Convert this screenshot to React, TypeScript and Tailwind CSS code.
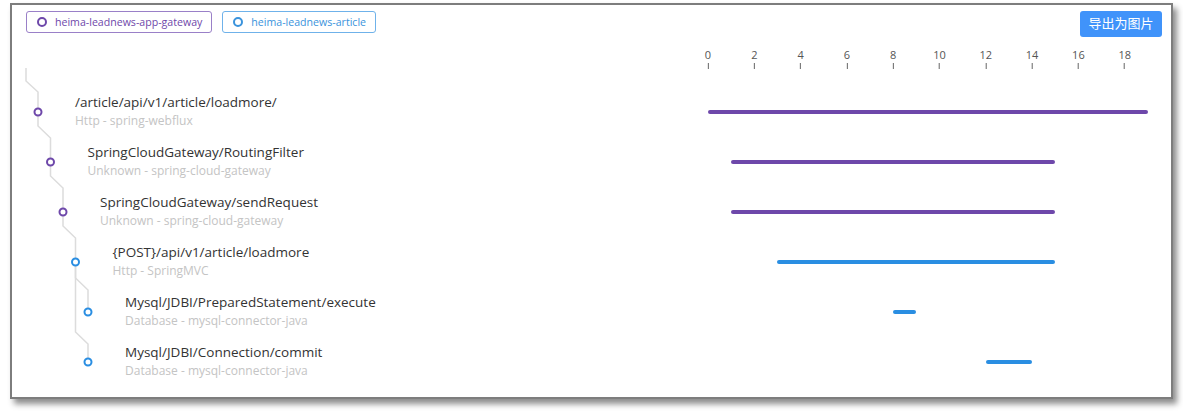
import React from "react";

const PURPLE = "#6e48aa";
const BLUE = "#2a8ee2";
const UNIT = 23.15;

type Row = { title: string; sub: string; depth: number; color: string; start: number; end: number };

const rows: Row[] = [
  { title: "/article/api/v1/article/loadmore/", sub: "Http - spring-webflux", depth: 0, color: PURPLE, start: 0, end: 19 },
  { title: "SpringCloudGateway/RoutingFilter", sub: "Unknown - spring-cloud-gateway", depth: 1, color: PURPLE, start: 1, end: 15 },
  { title: "SpringCloudGateway/sendRequest", sub: "Unknown - spring-cloud-gateway", depth: 2, color: PURPLE, start: 1, end: 15 },
  { title: "{POST}/api/v1/article/loadmore", sub: "Http - SpringMVC", depth: 3, color: BLUE, start: 3, end: 15 },
  { title: "Mysql/JDBI/PreparedStatement/execute", sub: "Database - mysql-connector-java", depth: 4, color: BLUE, start: 8, end: 9 },
  { title: "Mysql/JDBI/Connection/commit", sub: "Database - mysql-connector-java", depth: 4, color: BLUE, start: 12, end: 14 },
];

const ticks = [0, 2, 4, 6, 8, 10, 12, 14, 16, 18];

// tree line paths, coordinates relative to inner frame origin (page x-12, y-5)
const ox = 12;
const oy = 5;
const seg = (px: number, py: number, cx: number, cy: number, a: number, b: number) =>
  `M ${px - ox} ${py - oy} L ${px - ox} ${cy - a - oy} L ${cx - ox} ${cy - b - oy} L ${cx - ox} ${cy - oy}`;

const dots = [
  { x: 38, y: 112, c: PURPLE },
  { x: 50.5, y: 162, c: PURPLE },
  { x: 63, y: 212, c: PURPLE },
  { x: 75.5, y: 262, c: BLUE },
  { x: 88, y: 312, c: BLUE },
  { x: 88, y: 362, c: BLUE },
];

const paths = [
  seg(26, 68, 38, 112, 31, 20),
  seg(38, 112, 50.5, 162, 36, 24),
  seg(50.5, 162, 63, 212, 36, 24),
  seg(63, 212, 75.5, 262, 36, 24),
  seg(75.5, 262, 88, 312, 34, 22),
  seg(75.5, 262, 88, 362, 30, 18),
];

function Tag({ label, color, border }: { label: string; color: string; border: string }) {
  return (
    <div
      className="flex h-[22px] items-center gap-[8px] rounded-[3px] border pl-[10px] pr-[9px] text-[10.6px] leading-none"
      style={{ borderColor: border, color }}
    >
      <span className="box-border h-[10px] w-[10px] rounded-full border-2" style={{ borderColor: color }} />
      <span>{label}</span>
    </div>
  );
}

export default function App() {
  return (
    <div
      className="h-[415px] w-[1183px] bg-white pl-[10px] pt-[3px]"
      style={{ fontFamily: '"Open Sans", "Noto Sans CJK SC", sans-serif' }}
    >
      <div className="relative box-border h-[396px] w-[1163px] border-2 border-[#7d7d7d] bg-white shadow-[4px_5px_6px_rgba(0,0,0,0.45)]">
        <svg className="pointer-events-none absolute left-0 top-0" width="200" height="392">
          {paths.map((d, i) => (
            <path key={i} d={d} fill="none" stroke="#dcdcdc" strokeWidth="1.5" />
          ))}
          {dots.map((d, i) => (
            <circle key={i} cx={d.x - ox} cy={d.y - oy} r="3.5" fill="#fff" stroke={d.c} strokeWidth="2" />
          ))}
        </svg>

        {/* header */}
        <div className="flex items-start justify-between pl-[14px] pr-[9px] pt-[6px]">
          <div className="flex gap-[10px]">
            <Tag label="heima-leadnews-app-gateway" color="#6e48aa" border="#9a80c8" />
            <Tag label="heima-leadnews-article" color="#3a93dc" border="#6fb2ea" />
          </div>
          <button className="h-[26px] w-[82px] rounded-[3px] bg-[#4093fa] text-[13px] text-white">导出为图片</button>
        </div>

        {/* axis */}
        <div className="flex h-[50px]">
          <div className="w-[696px] shrink-0" />
          <div className="relative flex-1">
            {ticks.map((t) => (
              <div
                key={t}
                className="absolute top-[11px] flex -translate-x-1/2 flex-col items-center"
                style={{ left: t * UNIT }}
              >
                <span className="text-[11px] leading-[14px] text-[#555]">{t}</span>
                <span className="mt-[1px] h-[6px] w-px bg-[#666]" />
              </div>
            ))}
          </div>
        </div>

        {/* rows */}
        {rows.map((r, i) => (
          <div key={i} className="flex h-[50px]">
            <div className="w-[696px] shrink-0 pt-[6px]" style={{ paddingLeft: 63 + r.depth * 12.5 }}>
              <div className="text-[13.5px] leading-[18px] text-[#333]">{r.title}</div>
              <div className="mt-[2px] text-[12px] leading-[16px] text-[#c4c4c4]">{r.sub}</div>
            </div>
            <div className="relative flex-1">
              <div
                className="absolute top-[23px] h-[4px] rounded-full"
                style={{ left: r.start * UNIT, width: (r.end - r.start) * UNIT, backgroundColor: r.color }}
              />
            </div>
          </div>
        ))}
      </div>
    </div>
  );
}
